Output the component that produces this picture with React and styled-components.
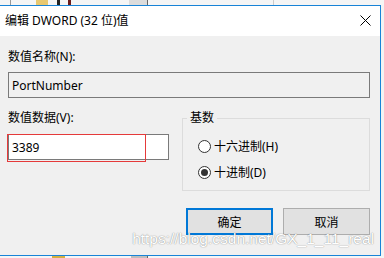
import React from 'react';
import styled, { createGlobalStyle } from 'styled-components';

const GlobalStyle = createGlobalStyle`
  html, body {
    margin: 0;
    padding: 0;
    background: #f3f3f3;
  }
  body {
    font-family: "Noto Sans", "Noto Sans CJK SC", sans-serif;
    font-size: 12px;
    color: #000;
  }
`;

const Page = styled.div`
  width: 384px;
  height: 258px;
  overflow: hidden;
  display: flex;
  flex-direction: column;
  position: relative;
  background: #f3f3f3;
`;

const Strip = styled.div`
  height: ${(p) => p.h}px;
  flex-shrink: 0;
  display: flex;
  align-items: stretch;
  background: #f5f5f5;
`;

const StripBit = styled.span`
  width: ${(p) => p.w}px;
  margin-left: ${(p) => p.ml || 0}px;
  background: ${(p) => p.c};
  flex-shrink: 0;
`;

const Dialog = styled.div`
  box-sizing: border-box;
  width: 382px;
  height: 251px;
  margin-left: -1px;
  flex-shrink: 0;
  border: 1px solid #1883d7;
  display: flex;
  flex-direction: column;
  background: #f0f0f0;
`;

const TitleBar = styled.div`
  height: 30px;
  flex-shrink: 0;
  background: #fff;
  display: flex;
  align-items: center;
  justify-content: space-between;
  padding: 0 9px 0 5px;
`;

const Title = styled.span`
  font-size: 12px;
  line-height: 16px;
`;

const CloseIcon = styled.svg`
  width: 11px;
  height: 11px;
  display: block;
  margin-top: -1px;
`;

const Body = styled.div`
  flex: 1;
  padding: 13px 10px 0 8px;
  display: flex;
  flex-direction: column;
`;

const Label = styled.div`
  line-height: 16px;
  height: 16px;
`;

const Field = styled.input`
  box-sizing: border-box;
  display: block;
  width: ${(p) => p.w}px;
  height: 26px;
  margin: ${(p) => p.mt}px 0 0 0;
  padding: 0 0 0 3px;
  border: 1px solid #7a7a7a;
  background: ${(p) => (p.readOnly ? '#f0f0f0' : '#fff')};
  font-family: "Noto Sans", "Noto Sans CJK SC", sans-serif;
  font-size: 12px;
  color: #000;
  outline: none;
`;

const Row = styled.div`
  display: flex;
  margin-top: 12px;
`;

const LeftCol = styled.div`
  width: 161px;
  flex-shrink: 0;
`;

const FieldWrap = styled.div`
  position: relative;
  margin-top: 8px;
`;

const RedMark = styled.div`
  position: absolute;
  left: -1px;
  top: 0;
  width: 139px;
  height: 28px;
  box-sizing: border-box;
  border: 1px solid #e53a3a;
  pointer-events: none;
`;

const Group = styled.fieldset`
  box-sizing: border-box;
  width: 189px;
  margin: 0 0 0 13px;
  padding: 12px 0 10px 15px;
  border: 1px solid #dcdcdc;
  min-width: 0;
`;

const Legend = styled.legend`
  padding: 0 3px;
  margin-left: -11px;
  line-height: 16px;
  font-size: 12px;
`;

const RadioRow = styled.div`
  display: flex;
  align-items: center;
  height: 16px;
  margin-top: ${(p) => (p.first ? 0 : 10)}px;
`;

const RadioCircle = styled.span`
  box-sizing: border-box;
  width: 13px;
  height: 13px;
  border-radius: 50%;
  border: 1px solid #333;
  background: #fff;
  display: flex;
  align-items: center;
  justify-content: center;
  margin-right: 3px;
  flex-shrink: 0;

  &::after {
    content: '';
    width: 7px;
    height: 7px;
    border-radius: 50%;
    background: ${(p) => (p.checked ? '#333' : 'transparent')};
  }
`;

const Buttons = styled.div`
  display: flex;
  justify-content: flex-end;
  gap: 10px;
  margin-top: 17px;
`;

const Button = styled.button`
  box-sizing: border-box;
  width: 87px;
  height: 27px;
  background: #e1e1e1;
  border: ${(p) => (p.primary ? '2px solid #0078d7' : '1px solid #adadad')};
  font-family: "Noto Sans", "Noto Sans CJK SC", sans-serif;
  font-size: 12px;
  color: #000;
  padding: 0;
`;

const Watermark = styled.div`
  position: absolute;
  right: 10px;
  top: 230px;
  font-family: "Liberation Sans", Arial, sans-serif;
  font-size: 15.5px;
  line-height: 18px;
  color: #fff;
  text-shadow: 0 0 1px rgba(0, 0, 0, 0.45), 0 0 2px rgba(0, 0, 0, 0.15);
  pointer-events: none;
`;

const App = () => {
  return (
    <Page>
      <GlobalStyle />
      <Strip h={5}>
        <StripBit w={1} ml={10} c="#999" />
        <StripBit w={12} ml={25} c="#e8c870" />
        <StripBit w={3} ml={9} c="#222" />
        <StripBit w={3} ml={8} c="#6b1a1a" />
        <StripBit w={18} ml={58} c="#dcdcdc" />
        <StripBit w={1} c="#666" />
        <StripBit w={1} ml={125} c="#ccc" />
      </Strip>
      <Dialog>
        <TitleBar>
          <Title>编辑 DWORD (32 位)值</Title>
          <CloseIcon viewBox="0 0 11 11">
            <path d="M0.5 0.5 L10.5 10.5 M10.5 0.5 L0.5 10.5" stroke="#000" strokeWidth="1" fill="none" />
          </CloseIcon>
        </TitleBar>
        <Body>
          <Label>数值名称(N):</Label>
          <Field w={362} mt={7} readOnly value="PortNumber" />
          <Row>
            <LeftCol>
              <Label>数值数据(V):</Label>
              <FieldWrap>
                <Field w={161} mt={0} defaultValue="3389" />
                <RedMark />
              </FieldWrap>
            </LeftCol>
            <Group>
              <Legend>基数</Legend>
              <RadioRow first>
                <RadioCircle />
                十六进制(H)
              </RadioRow>
              <RadioRow>
                <RadioCircle checked />
                十进制(D)
              </RadioRow>
            </Group>
          </Row>
          <Buttons>
            <Button primary>确定</Button>
            <Button>取消</Button>
          </Buttons>
        </Body>
      </Dialog>
      <Strip h={2}>
        <StripBit w={13} ml={52} c="#d4b040" />
        <StripBit w={16} ml={66} c="#bdbdbd" />
        <StripBit w={1} c="#666" />
      </Strip>
      <Watermark>https://blog.csdn.net/GX_1_11_real</Watermark>
    </Page>
  );
};

export default App;
